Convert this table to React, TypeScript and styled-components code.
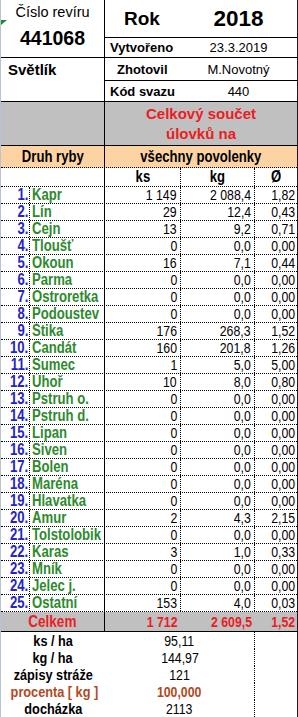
import styled, { createGlobalStyle } from "styled-components";

const GlobalStyle = createGlobalStyle`
  html, body {
    margin: 0;
    padding: 0;
    background: #ffffff;
  }
  * {
    box-sizing: border-box;
  }
`;

const font = `"Liberation Sans", Arial, sans-serif`;

const RED = "#ec1c24";
const GREEN = "#2d8a2d";
const BLUE = "#2424c8";
const BROWN = "#b04a1e";

// Arial Narrow is not installed, so the narrow cells squeeze Liberation Sans instead
const Narrow = styled.span<{ $origin?: string }>`
  display: inline-block;
  white-space: nowrap;
  transform: scaleX(0.82);
  transform-origin: ${(p) => p.$origin ?? "center"};
`;

const Sheet = styled.div`
  position: relative;
  width: 298px;
  height: 717px;
  border-left: 1px solid #b7c4d6;
  border-right: 1px solid #1a1a1a;
  background: #fff;
  overflow: hidden;
  color: #000;
  font-family: ${font};
`;

const ErrorMark = styled.div`
  position: absolute;
  left: 0;
  top: 20px;
  width: 0;
  height: 0;
  border-top: 5px solid #1f8a3a;
  border-right: 6px solid transparent;
`;

/* ---------- header block ---------- */
const Top = styled.div`
  display: grid;
  grid-template-columns: 104px 1fr;
  grid-template-rows: 38px 20px 23px 21px;
`;

const RevirCell = styled.div`
  grid-row: 1 / 3;
  border-right: 1px solid #000;
  border-bottom: 1px solid #000;
  display: flex;
  flex-direction: column;
  align-items: center;
  padding-top: 3px;
`;

const RevirLabel = styled.div`
  font-size: 14.5px;
  line-height: 18px;
`;

const RevirNumber = styled.div`
  font-size: 19.5px;
  font-weight: bold;
  line-height: 24px;
  margin-top: 5px;
`;

const NameCell = styled.div`
  grid-row: 3 / 5;
  border-right: 1px solid #000;
  border-bottom: 1px solid #000;
  font-size: 15px;
  font-weight: bold;
  padding: 3px 0 0 7px;
  line-height: 18px;
`;

const InfoRow = styled.div`
  display: grid;
  grid-template-columns: 75px 1fr;
  align-items: center;
  border-bottom: 1px solid #000;
`;

const InfoLabel = styled.div<{ $indent?: number }>`
  font-size: 13px;
  font-weight: bold;
  padding-left: ${(p) => p.$indent ?? 5}px;
  white-space: nowrap;
`;

const InfoValue = styled.div`
  font-size: 13px;
  text-align: center;
`;

const YearLabel = styled.div`
  font-size: 19px;
  font-weight: bold;
  padding-left: 19px;
`;

const YearValue = styled.div`
  font-size: 22.5px;
  font-weight: bold;
  text-align: center;
`;

/* ---------- table heading ---------- */
const Band = styled.div<{ $bg: string; $h: number; $line: string }>`
  display: grid;
  grid-template-columns: 104px 1fr;
  height: ${(p) => p.$h}px;
  background: ${(p) => p.$bg};
  border-bottom: 1px ${(p) => p.$line} #000;
`;

const BandSide = styled.div`
  border-right: 1px solid #000;
  display: flex;
  align-items: center;
  justify-content: center;
  font-size: 16px;
  font-weight: bold;
`;

const BandMain = styled.div`
  display: flex;
  flex-direction: column;
  align-items: center;
  justify-content: center;
  font-size: 16px;
  font-weight: bold;
`;

const SumTitle = styled.div`
  font-size: 15px;
  font-weight: bold;
  line-height: 20px;
  color: ${RED};
`;

/* ---------- rows ---------- */
const Row = styled.div<{ $h: number }>`
  display: grid;
  grid-template-columns: 29px 75px 76px 74px 1fr;
  height: ${(p) => p.$h}px;
  border-bottom: 1px dotted #000;
  font-size: 15px;
  line-height: ${(p) => p.$h - 1}px;
`;

const Idx = styled.div`
  border-right: 1px dotted #000;
  text-align: right;
  padding-right: 1px;
  font-weight: bold;
  font-size: 16px;
  color: ${BLUE};
`;

const Fish = styled.div`
  border-right: 1px solid #000;
  padding-left: 2px;
  font-weight: bold;
  font-size: 16px;
  color: ${GREEN};
  overflow: hidden;
`;

const Blank = styled.div<{ $span?: number }>`
  grid-column: span ${(p) => p.$span ?? 1};
  border-right: 1px solid #000;
`;

const Num = styled.div<{ $last?: boolean }>`
  text-align: right;
  padding-right: ${(p) => (p.$last ? 2 : 3)}px;
  border-right: ${(p) => (p.$last ? "none" : "1px dotted #000")};
`;

const HeadNum = styled.div<{ $last?: boolean }>`
  text-align: center;
  font-weight: bold;
  font-size: 16px;
  border-right: ${(p) => (p.$last ? "none" : "1px dotted #000")};
`;

const TotalRow = styled.div`
  display: grid;
  grid-template-columns: 104px 76px 74px 1fr;
  height: 20px;
  background: #c0c0c0;
  border-bottom: 1px solid #000;
  font-size: 15px;
  font-weight: bold;
  line-height: 19px;
  color: ${RED};
`;

const TotalLabel = styled.div`
  border-right: 1px solid #000;
  text-align: center;
  font-size: 16.5px;
`;

const TotalNum = styled.div<{ $last?: boolean }>`
  text-align: right;
  padding-right: ${(p) => (p.$last ? 2 : 3)}px;
`;

/* ---------- summary ---------- */
const Summary = styled.div`
  border-bottom: 1px solid #000;
`;

const StatRow = styled.div<{ $color?: string }>`
  display: grid;
  grid-template-columns: 104px 150px 1fr;
  height: 17px;
  line-height: 17px;
  font-size: 15px;
  color: ${(p) => p.$color ?? "#000"};
`;

const StatLabel = styled.div`
  text-align: center;
  font-weight: bold;
  font-size: 15.5px;
`;

const StatValue = styled.div<{ $bold?: boolean }>`
  text-align: center;
  font-weight: ${(p) => (p.$bold ? "bold" : "normal")};
  border-right: 1px dotted #000;
`;

type FishRow = [string, string, string, string];

const fish: FishRow[] = [
  ["Kapr", "1 149", "2 088,4", "1,82"],
  ["Lín", "29", "12,4", "0,43"],
  ["Cejn", "13", "9,2", "0,71"],
  ["Tloušť", "0", "0,0", "0,00"],
  ["Okoun", "16", "7,1", "0,44"],
  ["Parma", "0", "0,0", "0,00"],
  ["Ostroretka", "0", "0,0", "0,00"],
  ["Podoustev", "0", "0,0", "0,00"],
  ["Štika", "176", "268,3", "1,52"],
  ["Candát", "160", "201,8", "1,26"],
  ["Sumec", "1", "5,0", "5,00"],
  ["Úhoř", "10", "8,0", "0,80"],
  ["Pstruh o.", "0", "0,0", "0,00"],
  ["Pstruh d.", "0", "0,0", "0,00"],
  ["Lipan", "0", "0,0", "0,00"],
  ["Siven", "0", "0,0", "0,00"],
  ["Bolen", "0", "0,0", "0,00"],
  ["Maréna", "0", "0,0", "0,00"],
  ["Hlavatka", "0", "0,0", "0,00"],
  ["Amur", "2", "4,3", "2,15"],
  ["Tolstolobik", "0", "0,0", "0,00"],
  ["Karas", "3", "1,0", "0,33"],
  ["Mník", "0", "0,0", "0,00"],
  ["Jelec j.", "0", "0,0", "0,00"],
  ["Ostatní", "153", "4,0", "0,03"],
];

const stats = [
  { label: "ks / ha", value: "95,11" },
  { label: "kg / ha", value: "144,97" },
  { label: "zápisy stráže", value: "121" },
  { label: "procenta [ kg ]", value: "100,000", color: BROWN, bold: true },
  { label: "docházka", value: "2113" },
];

export default function App() {
  return (
    <>
      <GlobalStyle />
      <Sheet>
        <ErrorMark />
        <Top>
          <RevirCell>
            <RevirLabel>Číslo revíru</RevirLabel>
            <RevirNumber>441068</RevirNumber>
          </RevirCell>
          <InfoRow>
            <YearLabel>Rok</YearLabel>
            <YearValue>2018</YearValue>
          </InfoRow>
          <InfoRow>
            <InfoLabel>Vytvořeno</InfoLabel>
            <InfoValue>23.3.2019</InfoValue>
          </InfoRow>
          <NameCell>Světlík</NameCell>
          <InfoRow>
            <InfoLabel $indent={12}>Zhotovil</InfoLabel>
            <InfoValue>M.Novotný</InfoValue>
          </InfoRow>
          <InfoRow>
            <InfoLabel>Kód svazu</InfoLabel>
            <InfoValue>440</InfoValue>
          </InfoRow>
        </Top>

        <Band $bg="#c0c0c0" $h={44} $line="solid">
          <BandSide />
          <BandMain>
            <SumTitle>Celkový součet</SumTitle>
            <SumTitle>úlovků na</SumTitle>
          </BandMain>
        </Band>

        <Band $bg="#fdd3a4" $h={22} $line="dotted">
          <BandSide>
            <Narrow>Druh ryby</Narrow>
          </BandSide>
          <BandMain>
            <Narrow>všechny povolenky</Narrow>
          </BandMain>
        </Band>

        <Row $h={19}>
          <Blank $span={2} />
          <HeadNum>
            <Narrow>ks</Narrow>
          </HeadNum>
          <HeadNum>
            <Narrow>kg</Narrow>
          </HeadNum>
          <HeadNum $last>
            <Narrow>Ø</Narrow>
          </HeadNum>
        </Row>

        {fish.map(([name, ks, kg, avg], i) => (
          <Row $h={17} key={name}>
            <Idx>
              <Narrow $origin="right">{i + 1}.</Narrow>
            </Idx>
            <Fish>
              <Narrow $origin="left">{name}</Narrow>
            </Fish>
            <Num>
              <Narrow $origin="right">{ks}</Narrow>
            </Num>
            <Num>
              <Narrow $origin="right">{kg}</Narrow>
            </Num>
            <Num $last>
              <Narrow $origin="right">{avg}</Narrow>
            </Num>
          </Row>
        ))}

        <TotalRow>
          <TotalLabel>
            <Narrow>Celkem</Narrow>
          </TotalLabel>
          <TotalNum>
            <Narrow $origin="right">1 712</Narrow>
          </TotalNum>
          <TotalNum>
            <Narrow $origin="right">2 609,5</Narrow>
          </TotalNum>
          <TotalNum $last>
            <Narrow $origin="right">1,52</Narrow>
          </TotalNum>
        </TotalRow>

        <Summary>
          {stats.map((s) => (
            <StatRow key={s.label} $color={s.color}>
              <StatLabel>
                <Narrow>{s.label}</Narrow>
              </StatLabel>
              <StatValue $bold={s.bold}>
                <Narrow>{s.value}</Narrow>
              </StatValue>
              <div />
            </StatRow>
          ))}
        </Summary>
      </Sheet>
    </>
  );
}
